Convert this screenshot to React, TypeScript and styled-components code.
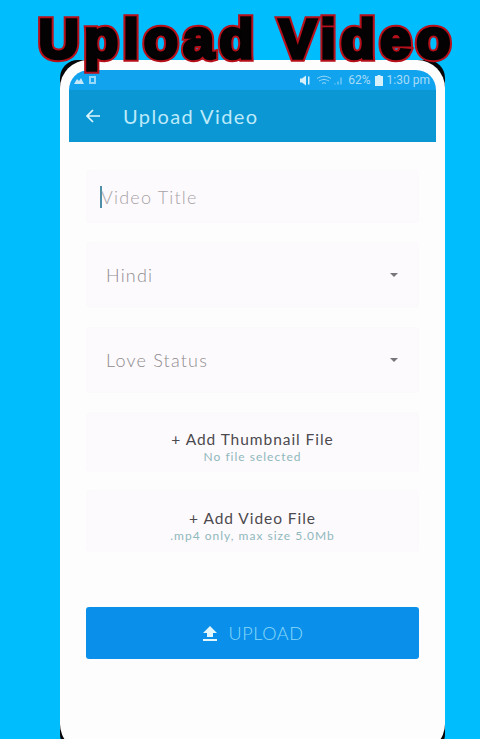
import React from "react";
import styled, { createGlobalStyle } from "styled-components";

const Global = createGlobalStyle`
  html, body { margin: 0; padding: 0; height: 739px; overflow: hidden; background: #00bdfe; }
  #root { height: 739px; overflow: hidden; }
  * { box-sizing: border-box; }
`;
const Page = styled.div`
  height: 739px;
  overflow: hidden;
  background: #00bdfe;
  font-family: "Lato", "Noto Sans", sans-serif;
  font-weight: 300;
  display: flex;
  flex-direction: column;
`;
const Banner = styled.h1`
  position: relative;
  z-index: 2;
  isolation: isolate;
  margin: 0;
  height: 60px;
  padding: 6px 0 0 14px;
  text-align: center;
  font: 700 56px/66px "Liberation Sans", Arial, sans-serif;
  letter-spacing: 5px;
  white-space: nowrap;
  color: #050204;
  -webkit-text-stroke: 3.5px #050204;
  paint-order: stroke fill;
  &::before {
    content: attr(data-text);
    position: absolute;
    inset: 6px 0 auto 14px;
    z-index: -1;
    -webkit-text-stroke: 7.5px #b8101a;
  }
`;
const Frame = styled.div`
  width: 385px;
  height: 692px;
  flex: none;
  margin-left: 60px;
  background: #060608;
  border-radius: 18px;
`;
const Phone = styled.div`
  height: 100%;
  background: #fefdfe;
  border-radius: 28px;
  padding: 10px 9px 0;
`;
const StatusBar = styled.div`
  height: 20px;
  background: #12a3ef;
  border-radius: 20px 20px 0 0;
  padding: 0 6px 0 5px;
  display: flex;
  align-items: center;
  justify-content: space-between;
  color: #a8dcf6;
  font: 400 12px/1 "Roboto", sans-serif;
`;
const StatusGroup = styled.div`
  display: flex;
  align-items: center;
  gap: 4px;
`;
const AppBar = styled.div`
  height: 52px;
  background: #0b97d3;
  display: flex;
  align-items: center;
  padding: 0 16px;
  gap: 22px;
  color: #bdeafa;
  font-size: 20px;
  font-weight: 400;
  letter-spacing: 1.4px;
`;
const Form = styled.div`
  padding: 28px 17px 0;
  display: flex;
  flex-direction: column;
`;
const Field = styled.div<{ $h: number; $gap: number }>`
  height: ${(p) => p.$h}px;
  margin-bottom: ${(p) => p.$gap}px;
  background: #fdfafd;
  border: 1px solid #fbf9fb;
  border-radius: 4px;
  display: flex;
  align-items: center;
  flex: none;
`;
const InputText = styled.span`
  margin-left: 13px;
  font-size: 18px;
  letter-spacing: 1.2px;
  color: #a6a2a6;
`;
const Caret = styled.span`
  display: inline-block;
  width: 2px;
  height: 22px;
  background: #4f8fa8;
  vertical-align: -4px;
  margin-right: -1px;
`;
const SelectText = styled.span`
  margin-left: 19px;
  flex: 1;
  font-size: 18px;
  letter-spacing: 1.2px;
  color: #8e8a8e;
`;
const Arrow = styled.span`
  width: 0;
  height: 0;
  margin-right: 20px;
  border-left: 4.5px solid transparent;
  border-right: 4.5px solid transparent;
  border-top: 4.5px solid #77747a;
`;
const FileBox = styled(Field)`
  flex-direction: column;
  justify-content: center;
  text-align: center;
  padding-top: 10px;
`;
const FileTitle = styled.div`
  font-size: 15.5px;
  font-weight: 400;
  line-height: 18px;
  letter-spacing: 0.95px;
  color: #4c4a4e;
`;
const FileHint = styled.div`
  font-size: 12px;
  font-weight: 400;
  line-height: 17px;
  letter-spacing: 1px;
  color: #8fb8bc;
`;
const UploadButton = styled.button`
  height: 52px;
  margin-top: 37px;
  padding: 0 0 0 1px;
  border: 0;
  border-radius: 3px;
  background: #0a90ea;
  color: #8adaf9;
  font: 300 18px "Lato", sans-serif;
  letter-spacing: 0.6px;
  display: flex;
  align-items: center;
  justify-content: center;
  gap: 12px;
`;

export default function App() {
  return (
    <Page>
      <Global />
      <Banner data-text="Upload Video">Upload Video</Banner>
      <Frame>
        <Phone>
          <StatusBar>
            <StatusGroup>
              <svg width="24" height="12" viewBox="0 0 24 12" fill="#c4e8fa">
                <path d="M0 10l3-5 2 2 2-3 3 6z" />
                <path d="M15 2h7v8h-7zM17 4v4h3V4z" fillRule="evenodd" opacity="0.75" />
              </svg>
            </StatusGroup>
            <StatusGroup>
              <svg width="12" height="11" viewBox="0 0 12 10" fill="#d6f0fb">
                <path d="M0 3h2l4-3v10L2 7H0zM8 1h1.500v8H8z" />
              </svg>
              <svg width="28" height="11" viewBox="0 0 28 10" fill="none" stroke="#9dd8f5">
                <path d="M1 3c5-3 9-3 14 0M3 5.500c4-2 6-2 10 0M6 8c1.500-1 2.500-1 4 0" />
                <path d="M19 9v-1M22 9V6M25 9V2" />
              </svg>
              <span>62%</span>
              <svg width="8" height="11" viewBox="0 0 8 11" fill="#d6f0fb">
                <path d="M2.500 0h3v1H8v10H0V1h2.500z" />
              </svg>
              <span>1:30 pm</span>
            </StatusGroup>
          </StatusBar>
          <AppBar>
            <svg width="16" height="16" viewBox="0 0 16 16" fill="none" stroke="#dff6fd" strokeWidth="1.700">
              <path d="M15 8H2M8 2L2 8l6 6" />
            </svg>
            <span>Upload Video</span>
          </AppBar>
          <Form>
            <Field $h={53} $gap={19}>
              <InputText>
                <Caret />Video Title
              </InputText>
            </Field>
            <Field $h={66} $gap={19}>
              <SelectText>Hindi</SelectText>
              <Arrow />
            </Field>
            <Field $h={66} $gap={19}>
              <SelectText>Love Status</SelectText>
              <Arrow />
            </Field>
            <FileBox $h={60} $gap={18}>
              <FileTitle>+ Add Thumbnail File</FileTitle>
              <FileHint>No file selected</FileHint>
            </FileBox>
            <FileBox $h={62} $gap={18}>
              <FileTitle>+ Add Video File</FileTitle>
              <FileHint>.mp4 only, max size 5.0Mb</FileHint>
            </FileBox>
            <UploadButton>
              <svg width="14" height="15" viewBox="0 0 14 15" fill="#e2f6fd">
                <path d="M7 0l7 7H10v4H4V7H0zM0 13h14v2H0z" />
              </svg>
              UPLOAD
            </UploadButton>
          </Form>
        </Phone>
      </Frame>
    </Page>
  );
}
